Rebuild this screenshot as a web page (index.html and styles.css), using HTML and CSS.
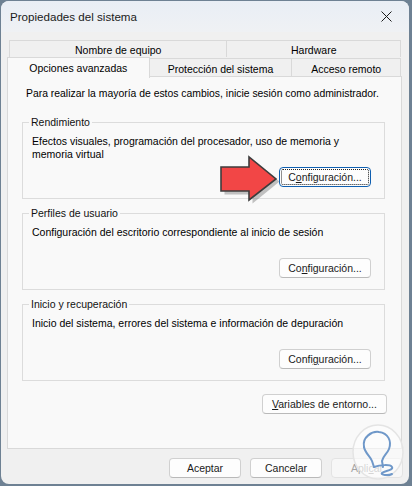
FILE: index.html
```html
<!DOCTYPE html>
<html lang="es">
<head>
  <meta charset="UTF-8">
  <title>Propiedades del sistema</title>
  <link rel="stylesheet" href="styles.css">
</head>
<body>

<div class="window">
  <div class="titlebar">
    <span class="title">Propiedades del sistema</span>
    <span class="close">
      <svg width="11" height="11" viewBox="0 0 11 11"><path d="M0.5 0.5 L10.5 10.5 M10.5 0.5 L0.5 10.5" stroke="#1b1b1b" stroke-width="1"/></svg>
    </span>
  </div>

  <div class="content">
    <div class="tabs back">
      <div class="tab w-nombre">Nombre de equipo</div>
      <div class="tab w-hardware">Hardware</div>
    </div>
    <div class="tabs front">
      <div class="tab active w-opciones">Opciones avanzadas</div>
      <div class="tab w-proteccion">Protección del sistema</div>
      <div class="tab w-acceso">Acceso remoto</div>
    </div>

    <div class="panel">
      <p class="intro">Para realizar la mayoría de estos cambios, inicie sesión como administrador.</p>

      <fieldset class="group">
        <legend>Rendimiento</legend>
        <div class="desc">Efectos visuales, programación del procesador, uso de memoria y memoria virtual</div>
        <div class="row">
          <button class="btn focused">C<u>o</u>nfiguración...</button>
        </div>
      </fieldset>

      <fieldset class="group">
        <legend>Perfiles de usuario</legend>
        <div class="desc">Configuración del escritorio correspondiente al inicio de sesión</div>
        <div class="row">
          <button class="btn">Co<u>n</u>figuración...</button>
        </div>
      </fieldset>

      <fieldset class="group">
        <legend>Inicio y recuperación</legend>
        <div class="desc">Inicio del sistema, errores del sistema e información de depuración</div>
        <div class="row">
          <button class="btn">Confi<u>g</u>uración...</button>
        </div>
      </fieldset>

      <div class="row env">
        <button class="btn wide"><u>V</u>ariables de entorno...</button>
      </div>
    </div>

    <div class="footer">
      <button class="btn">Aceptar</button>
      <button class="btn">Cancelar</button>
      <button class="btn disabled">Apli<u>c</u>ar</button>
    </div>
  </div>

  <!-- red pointer drawn over the dialog -->
  <svg class="arrow" width="70" height="54" viewBox="0 0 70 54">
    <path d="M9 17 L37 17 L37 6 L64 28 L37 50 L37 41 L9 41 Z" fill="#7a7a7a" opacity="0.45" transform="translate(1.5 1.5)"/>
    <path d="M7 15 L35 15 L35 5 L62 27 L35 48 L35 39 L7 39 Z" fill="#f24646" stroke="#3d3d3d" stroke-width="1.6" stroke-linejoin="miter"/>
  </svg>

  <!-- watermark -->
  <svg class="mark" width="56" height="60" viewBox="0 0 56 60">
    <ellipse cx="28" cy="29" rx="25" ry="27" fill="#ffffff" fill-opacity="0.55" stroke="#e4e4e4" stroke-width="1.5"/>
    <path d="M14 24 C12 14 22 8 29 9 C38 10 42 18 39 26 C37 31 33 33 32 38 L33 44" fill="none" stroke="#6f98c9" stroke-width="2" stroke-linecap="round"/>
    <path d="M14 24 C15 30 20 33 22 38 L24 44" fill="none" stroke="#6f98c9" stroke-width="2" stroke-linecap="round"/>
    <path d="M24 44 C30 42 40 41 42 44 C44 47 34 48 32 50 C30 52 38 53 42 51" fill="none" stroke="#6f98c9" stroke-width="2" stroke-linecap="round"/>
  </svg>
</div>

</body>
</html>
```

FILE: styles.css
```css
body {
  margin: 0;
  background: #6e8193;
  font-family: "Liberation Sans", Arial, sans-serif;
  font-size: 10.5px;
  color: #000;
}

.window {
  position: relative;
  margin: 1px 3px 0 1px;
  height: 483px;
  background: #f0f0f0;
  border-radius: 8px;
  overflow: hidden;
}

.titlebar {
  height: 31px;
  display: flex;
  align-items: center;
  justify-content: space-between;
  padding-left: 9px;
  background: linear-gradient(#e9eef5, #eff1f4);
}

.title {
  font-size: 11.6px;
  color: #1a1a1a;
}

.close {
  width: 46px;
  height: 31px;
  display: flex;
  align-items: center;
  justify-content: center;
}

.content {
  padding: 8px 7px 0 6px;
}

.tabs {
  display: flex;
}

.tabs.back {
  margin: 0 1px 0 2px;
}

.tabs.front {
  margin-right: 1px;
  align-items: flex-end;
}

.tab {
  box-sizing: border-box;
  border: 1px solid #d9d9d9;
  border-bottom: none;
  background: #f0f0f0;
  text-align: center;
  color: #000;
}

.tab + .tab {
  margin-left: -1px;
}

.back .tab {
  height: 17px;
  line-height: 17px;
  padding-top: 1px;
}

.front .tab {
  height: 18px;
  line-height: 18px;
  padding-top: 1px;
}

.front .tab.active {
  position: relative;
  z-index: 1;
  height: 21px;
  line-height: 18px;
  margin-bottom: -2px;
  background: #f9f9f9;
}

.w-nombre { width: 219px; }
.w-hardware { width: 175px; }
.w-opciones { width: 143px; }
.w-proteccion { width: 144px; }
.w-acceso { width: 110px; }

.panel {
  box-sizing: border-box;
  height: 373px;
  border: 1px solid #d9d9d9;
  background: #f9f9f9;
  padding: 10px 16px 0 14px;
}

.intro {
  margin: 0 0 16px 4px;
  font-size: 10.4px;
  line-height: 13px;
}

.group {
  margin: 0 0 8px 0;
  border: 1px solid #dcdcdc;
  padding: 6px 13px 11px 9px;
}

.group legend {
  margin-left: -3px;
  padding: 0 2px;
  line-height: 13px;
  color: #111;
}

.desc {
  min-height: 26px;
  line-height: 13px;
  margin-bottom: 6px;
}

.row {
  display: flex;
  justify-content: flex-end;
}

.row.env {
  margin-top: 13px;
  margin-right: -2px;
}

.btn {
  position: relative;
  box-sizing: border-box;
  width: 92px;
  height: 20px;
  padding: 0;
  border: 1px solid #d0d0d0;
  border-bottom-color: #b9b9b9;
  border-radius: 4px;
  background: #fdfdfd;
  font-family: inherit;
  font-size: 10.5px;
  color: #1a1a1a;
}

.btn u {
  text-underline-offset: 1px;
}

.btn.wide {
  width: 125px;
}

.btn.focused {
  border: 1px solid #0f5fb0;
}

.btn.focused::after {
  content: "";
  position: absolute;
  inset: 1px;
  border: 1px dotted #222;
  border-radius: 2px;
}

.footer {
  display: flex;
  justify-content: flex-end;
  gap: 9px;
  padding: 9px 0 0 0;
  margin-right: -1px;
}

.footer .btn {
  width: 72px;
  height: 20px;
}

.btn.disabled {
  color: #a3a3a3;
  background: #f7f7f7;
  border-color: #e3e3e3;
}

.arrow {
  position: absolute;
  left: 213px;
  top: 151px;
}

.mark {
  position: absolute;
  left: 349px;
  top: 422px;
}
```
